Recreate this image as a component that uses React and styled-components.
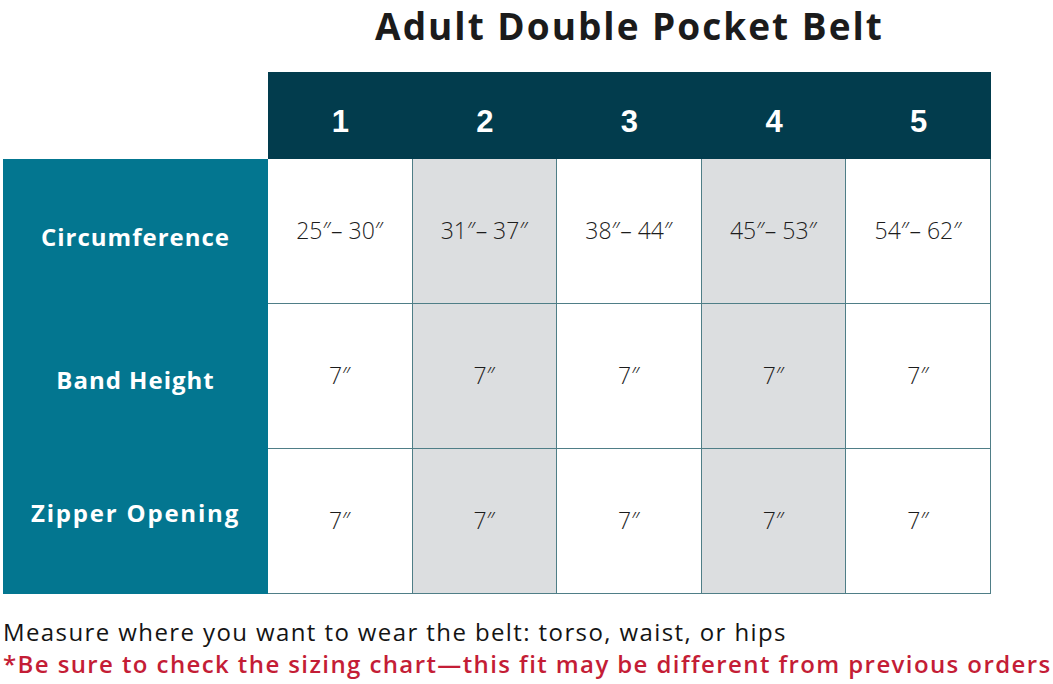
import React from 'react';
import styled, { createGlobalStyle } from 'styled-components';

const GlobalStyle = createGlobalStyle`
  body {
    margin: 0;
    background: #ffffff;
    font-family: "Open Sans", Lato, sans-serif;
  }
`;

const Page = styled.div`
  width: 1053px;
  height: 684px;
  padding-left: 3px;
  box-sizing: border-box;
  overflow: hidden;
`;

const Chart = styled.div`
  display: grid;
  grid-template-columns: 265px repeat(5, 144.6px);
  grid-template-rows: 72px 87px repeat(3, 145px);
  width: 988px;
`;

const Title = styled.h1`
  grid-column: 2 / -1;
  margin: 0;
  text-align: center;
  font-family: "Open Sans", sans-serif;
  font-weight: 700;
  font-size: 37px;
  letter-spacing: 2px;
  color: #1b1b1b;
  line-height: 51px;
`;

const Corner = styled.div``;

const HeadCell = styled.div`
  display: flex;
  align-items: center;
  justify-content: center;
  background: #023c4d;
  color: #ffffff;
  font-family: "Liberation Sans", Arial, sans-serif;
  font-weight: 700;
  font-size: 31px;
  padding-top: 12px;
`;

const RowLabel = styled.div`
  display: flex;
  align-items: center;
  justify-content: center;
  background: #037690;
  color: #ffffff;
  font-family: "Open Sans", sans-serif;
  font-weight: 700;
  font-size: 24px;
  letter-spacing: ${(p) => p.$spacing}px;
  padding-top: ${(p) => Math.max(p.$shift, 0)}px;
  padding-bottom: ${(p) => Math.max(-p.$shift, 0)}px;
`;

const Cell = styled.div`
  display: flex;
  align-items: center;
  justify-content: center;
  background: ${(p) => (p.$shaded ? '#dcdee0' : '#ffffff')};
  border-right: 1px solid #4f7e87;
  border-bottom: 1px solid #4f7e87;
  color: #1c1c1c;
  font-family: "Open Sans", sans-serif;
  font-weight: 300;
  font-size: 23px;
  padding-bottom: 3px;
`;

const Notes = styled.div`
  padding-top: 22px;
  font-family: "Open Sans", sans-serif;
  font-size: 24px;
  line-height: 32px;
`;

const Note = styled.p`
  margin: 0;
  white-space: nowrap;
  letter-spacing: 1.4px;
  color: ${(p) => (p.$warn ? '#c41d36' : '#141414')};
  font-weight: ${(p) => (p.$warn ? 600 : 400)};
`;

const sizes = ['1', '2', '3', '4', '5'];
const rows = [
  { label: 'Circumference', shift: 10, spacing: 1, values: ['25″– 30″', '31″– 37″', '38″– 44″', '45″– 53″', '54″– 62″'] },
  { label: 'Band Height', shift: 6, spacing: 1, values: ['7″', '7″', '7″', '7″', '7″'] },
  { label: 'Zipper Opening', shift: -18, spacing: 1.8, values: ['7″', '7″', '7″', '7″', '7″'] },
];

export default function App() {
  return (
    <Page>
      <GlobalStyle />
      <Chart>
        <Title>Adult Double Pocket Belt</Title>
        <Corner />
        {sizes.map((s) => (
          <HeadCell key={s}>{s}</HeadCell>
        ))}
        {rows.map((row) => (
          <React.Fragment key={row.label}>
            <RowLabel $shift={row.shift} $spacing={row.spacing}>{row.label}</RowLabel>
            {row.values.map((v, i) => (
              <Cell key={i} $shaded={i % 2 === 1}>
                {v}
              </Cell>
            ))}
          </React.Fragment>
        ))}
      </Chart>
      <Notes>
        <Note>Measure where you want to wear the belt: torso, waist, or hips</Note>
        <Note $warn>*Be sure to check the sizing chart—this fit may be different from previous orders</Note>
      </Notes>
    </Page>
  );
}
